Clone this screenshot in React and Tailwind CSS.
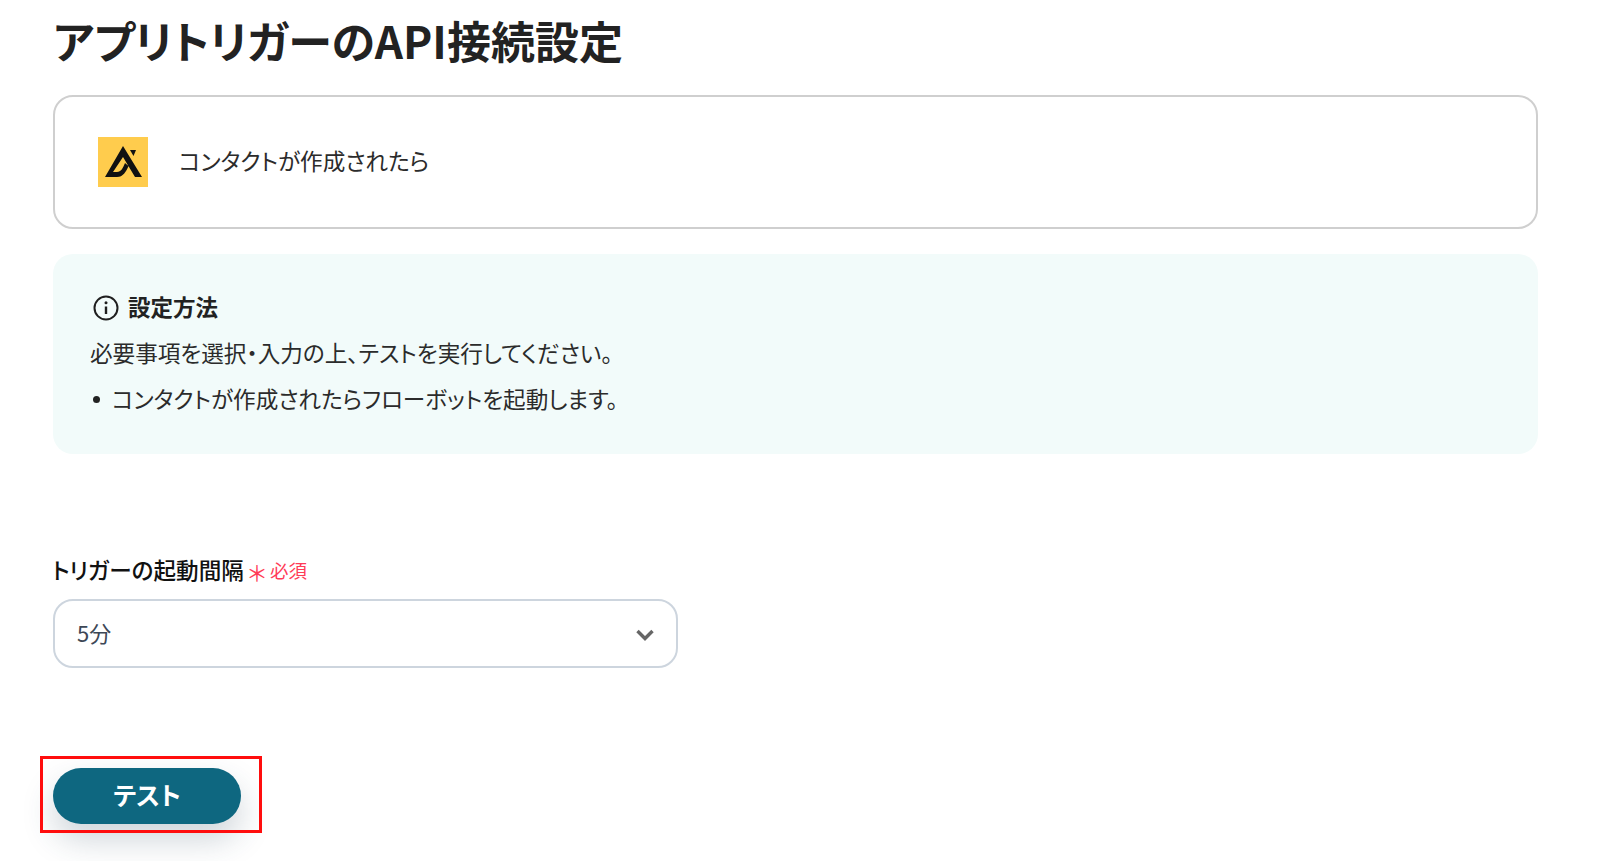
import React from "react";

const font = { fontFamily: '"Noto Sans CJK JP", "Noto Sans", sans-serif', fontFeatureSettings: '"palt"' };

function Logo() {
  return (
    <svg width="50" height="50" viewBox="0 0 50 50" className="shrink-0">
      <rect width="50" height="50" fill="#ffcc4d" />
      <path d="M25 9 L44 40 H37 L25 20 L15 35 H19 C23 35 25 31 27 26 L30.5 29 C28 35 25 40 19 40 H7 Z" fill="#111" />
      <path d="M32 13 L38 13 L35.5 19 Z" fill="#111" />
    </svg>
  );
}

function InfoIcon() {
  return (
    <svg width="28" height="28" viewBox="0 0 28 28" fill="none" stroke="#1f1f1f" className="shrink-0">
      <circle cx="14" cy="14" r="11.5" strokeWidth="2" />
      <path d="M14 12.5 V20" strokeWidth="2.4" />
      <circle cx="14" cy="8.8" r="1.5" fill="#1f1f1f" stroke="none" />
    </svg>
  );
}

export default function App() {
  return (
    <div style={font} className="relative w-[1600px] h-[861px] overflow-hidden bg-white pl-[53px] pr-[62px] text-[#222]">
      <h1 className="h-[95px] pt-[11px] text-[44px] leading-[58px] font-bold text-[#222]">
        アプリトリガーのAPI接続設定
      </h1>

      <div className="h-[134px] rounded-[20px] border-2 border-[#cfcfcf] flex items-center pl-[43px] gap-[31px]">
        <Logo />
        <span className="text-[22.6px] leading-[30px] -translate-y-[1px] text-[#2b2b2b]">コンタクトが作成されたら</span>
      </div>

      <div className="mt-[25px] h-[200px] rounded-[20px] bg-[#f2fbfa] pl-[37px] pt-[36px]">
        <div className="flex items-center gap-[8px] h-[34px]">
          <span className="ml-[2px] flex translate-y-[1px]"><InfoIcon /></span>
          <span className="text-[22.5px] font-bold text-[#222]">設定方法</span>
        </div>
        <p className="mt-[12px] text-[22.6px] leading-[34px] text-[#2b2b2b]">
          必要事項を選択・入力の上、テストを実行してください。
        </p>
        <div className="mt-[12px] flex items-center gap-[12px] text-[22.6px] leading-[34px] text-[#2b2b2b]">
          <span className="ml-[3px] w-[7px] h-[7px] rounded-full bg-[#222]" />
          <span>コンタクトが作成されたらフローボットを起動します。</span>
        </div>
      </div>

      <div className="mt-[99px] -ml-[1px] h-[34px] flex items-center">
        <span className="text-[22.6px] font-medium text-[#111]">トリガーの起動間隔</span>
        <span className="ml-[4px] text-[22px] leading-none text-[#ff3b57] translate-y-[1px]">＊</span>
        <span className="ml-[4px] text-[18.5px] text-[#ff3b57] translate-y-[1px]">必須</span>
      </div>

      <div className="mt-[12px] w-[625px] h-[69px] rounded-[20px] border-2 border-[#cdd5de] flex items-center justify-between pl-[22px] pr-[21px]">
        <span className="text-[22px] -translate-y-[1px] text-[#3d4756]">5分</span>
        <svg width="20" height="14" viewBox="0 0 20 14" fill="none" stroke="#666" strokeWidth="3.4" className="translate-y-[1px]">
          <path d="M2.5 3 L10 10.5 L17.5 3" />
        </svg>
      </div>

      <div className="relative mt-[100px] w-[188px] h-[56px]">
        <button className="w-full h-full rounded-full bg-[#0e6780] text-white text-[25px] font-bold shadow-[0_16px_32px_rgba(40,70,90,0.22)]">
          <span className="relative -top-[1px]">テスト</span>
        </button>
        <div className="absolute left-[-13px] top-[-12px] w-[222px] h-[77px] border-[3px] border-[#ff0d0d]" />
      </div>
    </div>
  );
}
